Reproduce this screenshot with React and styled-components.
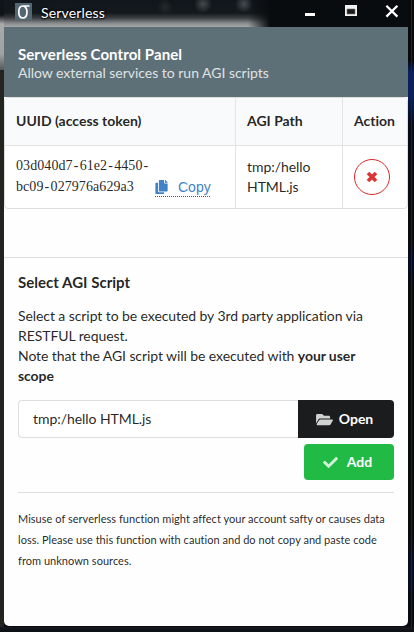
import React from "react";
import styled, { createGlobalStyle } from "styled-components";
import { FaFolderOpen, FaCheck, FaCopy } from "react-icons/fa";

const GlobalStyle = createGlobalStyle`
  *, *::before, *::after { box-sizing: border-box; }
  html, body { margin: 0; padding: 0; overflow: hidden; }
  body {
    font-family: Lato, "Liberation Sans", sans-serif;
    font-size: 14px;
    line-height: 20px;
    font-variant-ligatures: none;
    color: rgba(0, 0, 0, 0.87);
  }
`;

const Desktop = styled.div`
  width: 414px;
  height: 632px;
  padding: 0 6px 6px 4px;
  background:
    linear-gradient(#15191e, #0c1014) bottom / 100% 5px no-repeat,
    linear-gradient(to right, #24241f, #22221f) left 70px / 4px 562px no-repeat,
    linear-gradient(#101317 0 15px, #aaaaaa 24px, #a0a2a3 54px, #55585a 70px) left top / 4px 70px no-repeat,
    linear-gradient(to right, transparent 0 3px, #222421 3px 4px, transparent 4px) right / 6px 100% no-repeat,
    linear-gradient(#07090b 0 60px, #0a205c 72px, #0b1f58 96px, #080c18 125px, #0a0b0c 240px, #060c24 262px, #0a0b0b 290px, #0a0b0b 530px, #090e26 570px, #080b10 610px);
`;

const AppWindow = styled.section`
  height: 626px;
  display: flex;
  flex-direction: column;
  border-radius: 0 0 5px 5px;
  overflow: hidden;
  background: #fefefe;
`;

const TitleBar = styled.header`
  height: 27px;
  flex: none;
  display: flex;
  align-items: flex-start;
  color: #fff;
  background:
    linear-gradient(to right, transparent 244px, #090c0f 266px),
    radial-gradient(circle at 161px 7px, #24292b 0, transparent 8px),
    radial-gradient(circle at 199px 4px, #444b4c 0, transparent 9px),
    radial-gradient(circle at 240px 4px, #444b51 0, transparent 9px),
    linear-gradient(#11161c 0, #14191e 13px, #3b3f43 18px, #85888a 23px, #a6a8a9 27px);
`;

const AppIcon = styled.svg`
  width: 17px;
  height: 17px;
  margin: 3px 9px 0 11px;
`;

const WindowTitle = styled.h1`
  flex: 1;
  margin: 3px 0 0;
  font-size: 14px;
  line-height: 20px;
  font-weight: 400;
  letter-spacing: 0.17px;
  text-shadow: 0 1px 2px #000, 0 0 3px #000;
`;

const WindowControls = styled.svg`
  width: 100px;
  height: 25px;
  flex: none;
  margin-right: 4px;
`;

const Banner = styled.div`
  height: 70px;
  flex: none;
  padding: 17px 14px 0;
  background: #5e7077;
  color: #fff;
`;

const BannerTitle = styled.h2`
  margin: 0;
  font-size: 15px;
  line-height: 20px;
  font-weight: 700;
  letter-spacing: 0.08px;
`;

const BannerText = styled.p`
  margin: 0;
  line-height: 18px;
  letter-spacing: -0.02px;
  color: #dfe2e4;
`;

const TokenArea = styled.div`
  height: 161px;
  flex: none;
  background: #fefefe;
  border-bottom: 1px solid #dededf;
`;

const TokenTable = styled.div`
  display: grid;
  width: 404px;
  height: 112px;
  grid-template-columns: 230px 107px 1fr;
  grid-template-rows: 48px 1fr;
  border: 1px solid #dededf;
  border-radius: 4px;
  overflow: hidden;
  background: #fff;
`;

const Cell = styled.div`
  display: flex;
  align-items: center;
  padding: 0 11px;
  white-space: nowrap;
  border-left: ${(p) => (p.$first ? "0" : "1px solid #e4e4e5")};
`;

const HeadCell = styled(Cell)`
  background: #f9fafb;
  border-bottom: 1px solid #e4e4e5;
  padding-bottom: 1px;
  font-weight: 700;
`;

const TokenCell = styled(Cell)`
  align-items: flex-end;
  padding-bottom: 11px;
`;

const PathCell = styled(Cell)`
  letter-spacing: -0.05px;
`;

const Token = styled.code`
  width: 139px;
  font: 14px/21px "Liberation Serif", serif;
  letter-spacing: 0.08px;
`;

const Dash = styled.span`
  display: inline-block;
  width: 7px;
  padding-left: 1px;
`;

const CopyLink = styled.a`
  display: flex;
  align-items: center;
  gap: 10px;
  width: 55px;
  height: 20px;
  font-size: 14px;
  color: #4183c4;
  font-family: "Liberation Sans", sans-serif;
  border-bottom: 1px dotted #555;
  svg { width: 13px; height: 14px; flex: none; }
`;

const RemoveButton = styled.button`
  display: flex;
  align-items: center;
  justify-content: center;
  width: 36px;
  height: 36px;
  padding: 0;
  border: 1px solid #db2828;
  border-radius: 50%;
  background: transparent;
  color: #dc3535;
  svg { width: 12px; height: 12px; }
`;

const ScriptArea = styled.main`
  padding: 14px 14px 0;
`;

const SectionTitle = styled.h3`
  margin: 0 0 14px;
  font-size: 15px;
  line-height: 20px;
  font-weight: 700;
  letter-spacing: 0.02px;
`;

const Description = styled.p`
  margin: 0;
  white-space: nowrap;
  letter-spacing: -0.08px;
`;

const PathField = styled.div`
  display: flex;
  height: 38px;
  margin-top: 14px;
`;

const PathInput = styled.input`
  flex: 1;
  min-width: 0;
  padding: 0 14px;
  font: inherit;
  letter-spacing: -0.06px;
  color: inherit;
  background: #fff;
  border: 1px solid #dededf;
  border-right: 0;
  border-radius: 4px 0 0 4px;
  outline: 0;
`;

const ActionButton = styled.button`
  display: flex;
  align-items: center;
  justify-content: center;
  padding: 0;
  border: 0;
  color: #fff;
  font: 700 14px/20px Lato, sans-serif;
  svg { opacity: 0.8; }
`;

const OpenButton = styled(ActionButton)`
  width: 96px;
  gap: 6px;
  background: #1b1c1d;
  border-radius: 0 4px 4px 0;
  padding-right: 3px;
  svg { width: 17px; height: 15px; }
`;

const AddButton = styled(ActionButton)`
  width: 90px;
  height: 36px;
  gap: 9px;
  margin: 6px 0 0 auto;
  padding-right: 3px;
  background: #21ba45;
  border-radius: 4px;
  svg { width: 15px; height: 15px; }
`;

const Divider = styled.hr`
  height: 1px;
  margin: 12px 0 15px;
  border: 0;
  background: #dededf;
`;

const Warning = styled.p`
  margin: 0;
  font-size: 11px;
  line-height: 21px;
  letter-spacing: 0.03px;
  white-space: nowrap;
`;

export default function App() {
  return (
    <>
      <GlobalStyle />
      <Desktop>
        <AppWindow>
          <TitleBar>
            <AppIcon viewBox="0 0 17 17">
              <path d="M0 0H17V17H0Z" fill="#526772" />
              <path d="M14.5 3H8C5 3 3.8 5 3.8 9C3.8 12.8 5.2 15 7.8 15S12 12.8 12 9C12 5.7 11 4 8.5 3" fill="none" stroke="#fff" strokeWidth="1.7" />
            </AppIcon>
            <WindowTitle>Serverless</WindowTitle>
            <WindowControls viewBox="0 0 100 25">
              <path d="M1 13h10v3H1Z" fill="#fff" />
              <path d="M41 5h12v11H41Z" fill="#f2f2f2" />
              <path d="M43 9h8v5h-8Z" fill="#191c1e" stroke="#777" strokeWidth="0.6" />
              <path d="M82.4 5.8L93.4 16.6M93.4 5.8L82.4 16.6" stroke="#fff" strokeWidth="2.3" />
            </WindowControls>
          </TitleBar>

          <Banner>
            <BannerTitle>Serverless Control Panel</BannerTitle>
            <BannerText>Allow external services to run AGI scripts</BannerText>
          </Banner>

          <TokenArea>
            <TokenTable>
              <HeadCell $first>UUID (access token)</HeadCell>
              <HeadCell>AGI Path</HeadCell>
              <HeadCell>Action</HeadCell>
              <TokenCell $first>
                <Token>
                  03d040d7<Dash>-</Dash>61e2<Dash>-</Dash>4450<Dash>-</Dash>
                  <br />
                  bc09<Dash>-</Dash>027976a629a3
                </Token>
                <CopyLink><FaCopy />Copy</CopyLink>
              </TokenCell>
              <PathCell>tmp:/hello<br />HTML.js</PathCell>
              <Cell>
                <RemoveButton aria-label="Remove">
                  <svg viewBox="0 0 12 12">
                    <path d="M2 2L10 10M10 2L2 10" stroke="currentColor" strokeWidth="3.6" />
                  </svg>
                </RemoveButton>
              </Cell>
            </TokenTable>
          </TokenArea>

          <ScriptArea>
            <SectionTitle>Select AGI Script</SectionTitle>
            <Description>
              Select a script to be executed by 3rd party application via<br />
              RESTFUL request.<br />
              Note that the AGI script will be executed with <b>your user<br />
              scope</b>
            </Description>
            <PathField>
              <PathInput defaultValue="tmp:/hello HTML.js" />
              <OpenButton><FaFolderOpen />Open</OpenButton>
            </PathField>
            <AddButton><FaCheck />Add</AddButton>
            <Divider />
            <Warning>
              Misuse of serverless function might affect your account safty or causes data<br />
              loss. Please use this function with caution and do not copy and paste code<br />
              from unknown sources.
            </Warning>
          </ScriptArea>
        </AppWindow>
      </Desktop>
    </>
  );
}
